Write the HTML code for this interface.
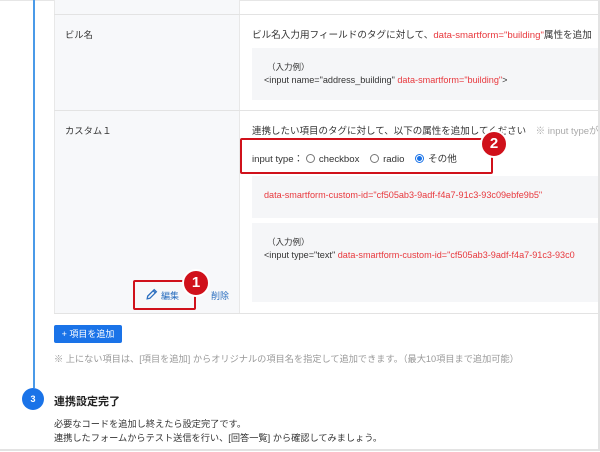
<!DOCTYPE html>
<html><head><meta charset="utf-8"><style>
*{margin:0;padding:0;box-sizing:border-box}
html,body{width:600px;height:452px;overflow:hidden}
body{background:#fff;font-family:"Liberation Sans","Noto Sans CJK JP",sans-serif;color:#333;font-size:9.3px}
#w{position:relative;width:600px;height:452px;overflow:hidden}
.a{position:absolute;white-space:nowrap}
.r{color:#e8383d}
.frame{position:absolute;left:0;top:0;width:600px;height:451px;border-top:1px solid #e6e6e6;border-right:2px solid #e3e3e3;border-bottom:2px solid #e3e3e3}
.lab{position:absolute;left:54px;top:0;width:186px;height:313px;background:#f7f8fa;border-left:1px solid #e8e8e8;border-right:1px solid #e8e8e8}
.hl{position:absolute;left:54px;width:544px;height:1px;background:#e3e3e3}
.box{position:absolute;left:252px;width:346px;background:#f5f6f8}
.rb{position:absolute;border:2px solid #d0111b;border-radius:2px}
.badge{position:absolute;width:28px;height:28px;border-radius:50%;background:#d0111b;border:2px solid #fff;color:#fff;font-weight:bold;font-size:15px;text-align:center;line-height:24px}
.rad{display:inline-block;width:9px;height:9px;border:1px solid #777;border-radius:50%;vertical-align:-1px;margin-right:4px}
</style></head><body><div id="w">
<div class="frame"></div>
<div style="position:absolute;left:33px;top:0;width:2px;height:388px;background:#4a9ae8"></div>
<div class="lab"></div>
<div class="hl" style="top:14px"></div>
<div class="hl" style="top:110px"></div>
<div class="hl" style="top:313px"></div>
<div class="a" style="left:65px;top:27px">ビル名</div>
<div class="a" style="left:252px;top:27px;font-size:9.6px">ビル名入力用フィールドのタグに対して、<span class="r">data-smartform="building"</span>属性を追加</div>
<div class="box" style="top:48px;height:52px"></div>
<div class="a" style="left:267px;top:61px;font-size:8.5px">（入力例）</div>
<div class="a" style="left:264px;top:75px;font-size:9.1px">&lt;input name="address_building" <span class="r">data-smartform="building"</span>&gt;</div>
<div class="a" style="left:65px;top:123px">カスタム１</div>
<div class="a" style="left:252px;top:123px;font-size:9.5px">連携したい項目のタグに対して、以下の属性を追加してください　<span style="color:#aaa">※ input typeが</span></div>
<div class="a" style="left:252px;top:151px;font-size:9.6px">input type：&nbsp;<span class="rad"></span>checkbox&nbsp;&nbsp;&nbsp;&nbsp;<span class="rad"></span>radio&nbsp;&nbsp;&nbsp;&nbsp;<span class="rad" style="border-color:#1a73e8;background:radial-gradient(#1a73e8 45%,#fff 55%)"></span>その他</div>
<div class="box" style="top:176px;height:42px"></div>
<div class="a r" style="left:264px;top:190px;font-size:9.1px">data-smartform-custom-id="cf505ab3-9adf-f4a7-91c3-93c09ebfe9b5"</div>
<div class="box" style="top:223px;height:79px"></div>
<div class="a" style="left:267px;top:236px;font-size:8.5px">（入力例）</div>
<div class="a" style="left:264px;top:250px;font-size:9.1px">&lt;input type="text" <span class="r">data-smartform-custom-id="cf505ab3-9adf-f4a7-91c3-93c0</span></div>
<svg class="a" style="left:145px;top:288px" width="13" height="13" viewBox="0 0 12 12"><path d="M2 10 L2.5 7.5 L8.5 1.5 L10.5 3.5 L4.5 9.5 Z M7.5 2.5 L9.5 4.5" fill="none" stroke="#2c6fbf" stroke-width="1.2"/></svg>
<div class="a" style="left:161px;top:289px;font-size:9px;color:#2c6fbf">編集</div>
<div class="a" style="left:211px;top:289px;font-size:9px;color:#2c6fbf">削除</div>
<div class="rb" style="left:133px;top:280px;width:63px;height:30px"></div>
<div class="badge" style="left:182px;top:269px">1</div>
<div class="rb" style="left:240px;top:138px;width:253px;height:36px"></div>
<div class="badge" style="left:480px;top:130px">2</div>
<div class="a" style="left:54px;top:325px;width:68px;height:18px;background:#1a73e8;border-radius:2px;color:#fff;font-size:9px;line-height:18px;text-align:center">+ 項目を追加</div>
<div class="a" style="left:54px;top:351px;color:#999;font-size:9.2px">※ 上にない項目は、[項目を追加] からオリジナルの項目名を指定して追加できます。（最大10項目まで追加可能）</div>
<div class="a" style="left:22px;top:388px;width:22px;height:22px;border-radius:50%;background:#1a73e8;color:#fff;font-size:9px;font-weight:bold;text-align:center;line-height:22px">3</div>
<div class="a" style="left:54px;top:393px;font-size:11px;font-weight:bold;color:#222">連携設定完了</div>
<div class="a" style="left:54px;top:416px;font-size:9.2px">必要なコードを追加し終えたら設定完了です。</div>
<div class="a" style="left:54px;top:430px;font-size:9.2px">連携したフォームからテスト送信を行い、[回答一覧] から確認してみましょう。</div>
</div></body></html>
